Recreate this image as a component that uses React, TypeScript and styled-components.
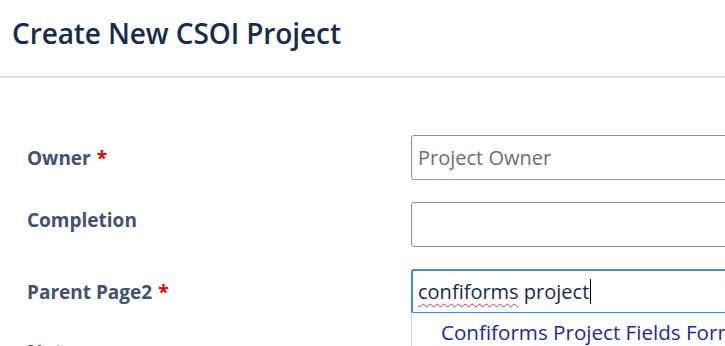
import React from "react";
import styled, { createGlobalStyle } from "styled-components";

const Global = createGlobalStyle`
  html, body { margin: 0; padding: 0; background: #fff; overflow: hidden; }
  body { font-family: "Open Sans", "Noto Sans", sans-serif; }
`;

const Page = styled.div`
  width: 725px;
  height: 346px;
  overflow: hidden;
  background: #fff;
`;

const Header = styled.header`
  height: 78px;
  box-sizing: border-box;
  padding: 12px 12px 0;
  border-bottom: 2px solid #dfe1e6;
`;

const Title = styled.h1`
  margin: 0;
  font-size: 28px;
  line-height: 42px;
  font-weight: 600;
  color: #172b4d;
  letter-spacing: -0.1px;
`;

const Form = styled.div`
  display: flex;
  flex-direction: column;
  gap: 22px;
  padding: 57px 0 0 27px;
`;

const Row = styled.div`
  display: grid;
  grid-template-columns: 384px 420px;
  align-items: start;
`;

const Label = styled.label<{ $offset: number }>`
  padding-top: ${(p) => p.$offset}px;
  font-size: 19px;
  line-height: 20px;
  font-weight: 700;
  color: #42526e;
`;

const Required = styled.span`
  color: #de0000;
  margin-left: 6px;
`;

const Field = styled.div`
  position: relative;
`;

const Input = styled.div<{ $focused?: boolean }>`
  height: 45px;
  box-sizing: border-box;
  border: ${(p) => (p.$focused ? "2px solid #4a88cc" : "1px solid #8f8f8f")};
  border-radius: 3px;
  padding: 0 ${(p) => (p.$focused ? "5px" : "6px")};
  display: flex;
  align-items: center;
  font-size: 20px;
  color: #172b4d;
  white-space: nowrap;
`;

const Placeholder = styled.span`
  color: #6b6f76;
`;

const Misspelled = styled.span`
  text-decoration: underline wavy #d23a3a;
  text-decoration-thickness: 1px;
  text-underline-offset: 4px;
`;

const Caret = styled.span`
  display: inline-block;
  width: 1px;
  height: 25px;
  background: #000;
  margin-left: 1px;
`;

const Menu = styled.div`
  position: absolute;
  left: 0;
  top: 44px;
  width: 400px;
  height: 40px;
  background: #fff;
  border-left: 1px solid #d0d0d0;
  padding: 5px 0 0 29px;
  box-sizing: border-box;
`;

const MenuItem = styled.div`
  font-size: 20.6px;
  line-height: 28px;
  color: #1f2a93;
  white-space: nowrap;
`;

export default function App() {
  return (
    <Page>
      <Global />
      <Header>
        <Title>Create New CSOI Project</Title>
      </Header>
      <Form>
        <Row>
          <Label $offset={13}>
            Owner<Required>*</Required>
          </Label>
          <Input>
            <Placeholder>Project Owner</Placeholder>
          </Input>
        </Row>
        <Row>
          <Label $offset={8}>Completion</Label>
          <Input />
        </Row>
        <Row>
          <Label $offset={13}>
            Parent Page2<Required>*</Required>
          </Label>
          <Field>
            <Input $focused>
              <Misspelled>confiforms</Misspelled>&nbsp;project<Caret />
            </Input>
            <Menu>
              <MenuItem>Confiforms Project Fields Form</MenuItem>
            </Menu>
          </Field>
        </Row>
        <Row>
          <Label $offset={6}>Notes</Label>
        </Row>
      </Form>
    </Page>
  );
}
